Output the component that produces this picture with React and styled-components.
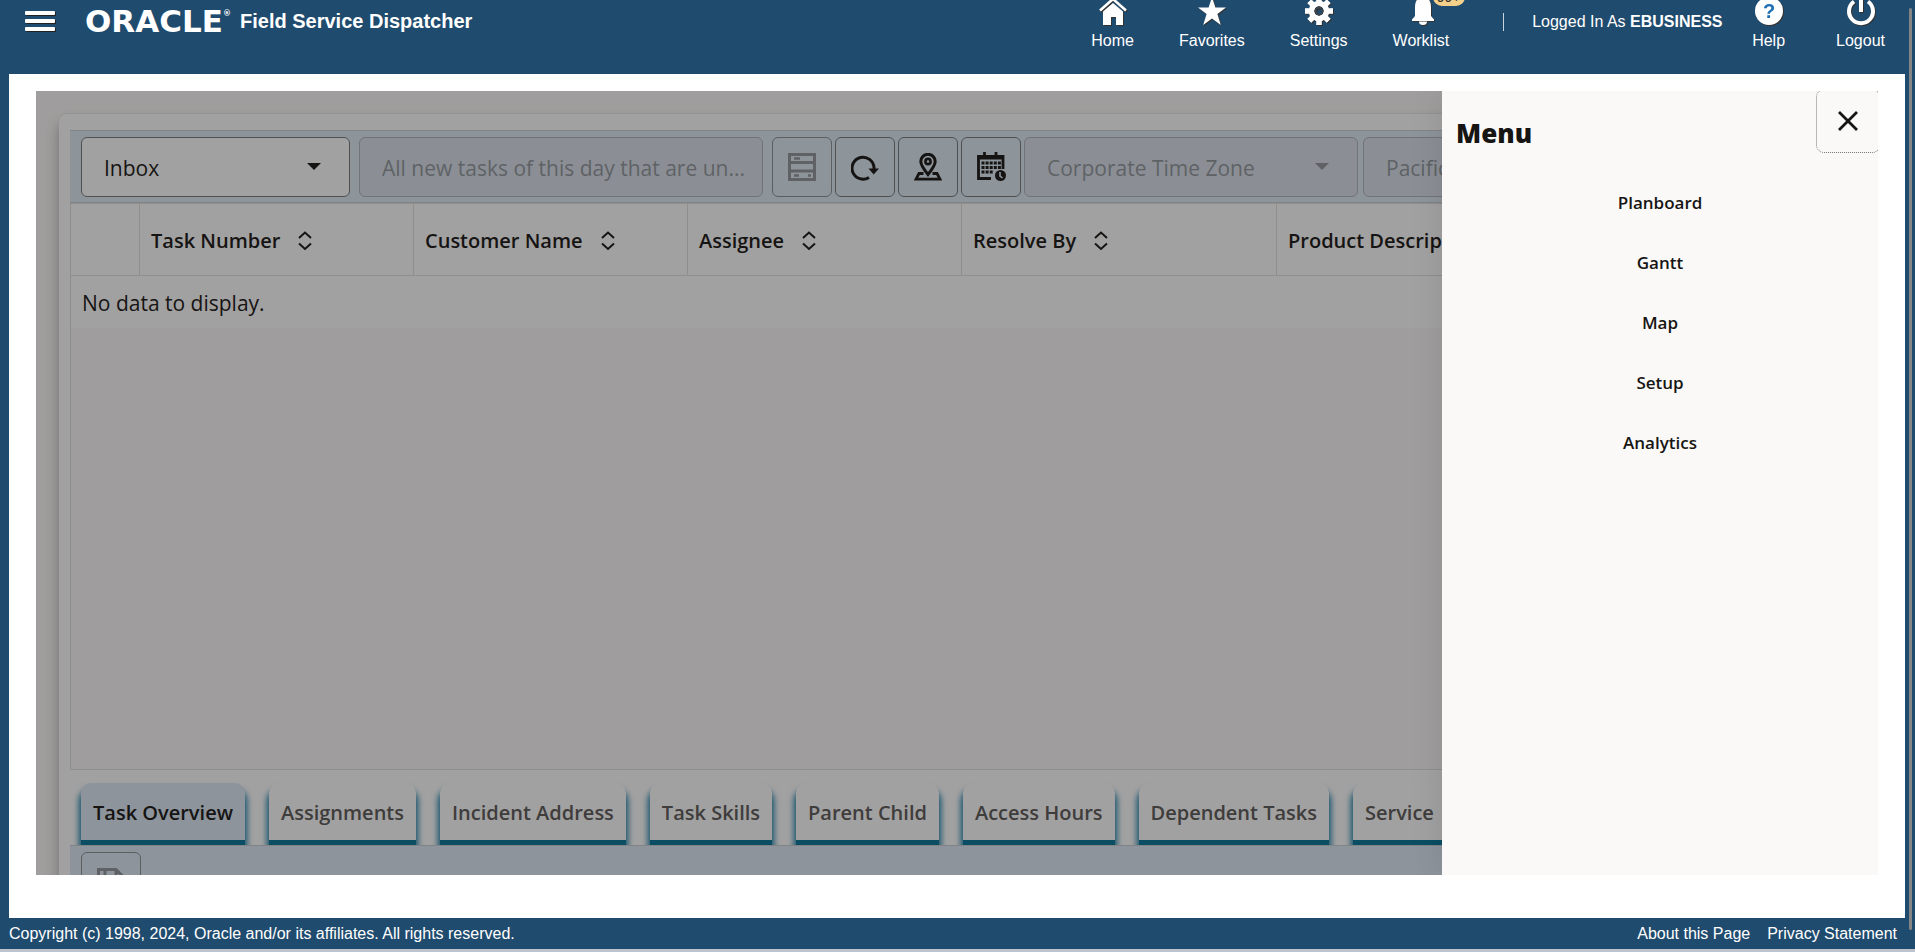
import React from 'react';
import styled, { createGlobalStyle } from 'styled-components';

const columns = [
    { name: '', width: 69 },
    { name: 'Task Number', width: 274 },
    { name: 'Customer Name', width: 274 },
    { name: 'Assignee', width: 274 },
    { name: 'Resolve By', width: 315 },
    { name: 'Product Description' },
];

const tabs = [
    'Task Overview',
    'Assignments',
    'Incident Address',
    'Task Skills',
    'Parent Child',
    'Access Hours',
    'Dependent Tasks',
    'Service',
];

const menuItems = ['Planboard', 'Gantt', 'Map', 'Setup', 'Analytics'];

const App = () => {
    return (
        <Page>
            <GlobalStyle />
            <Header>
                <Brand>
                    <MenuButton aria-label="Navigator">
                        <MenuBar />
                        <MenuBar />
                        <MenuBar />
                    </MenuButton>
                    <Logo>
                        ORACLE<sup>®</sup>
                    </Logo>
                    <AppTitle>Field Service Dispatcher</AppTitle>
                </Brand>
                <Nav>
                    <NavLink href="#home">
                        <HomeIcon />
                        Home
                    </NavLink>
                    <NavLink href="#favorites">
                        <StarIcon />
                        Favorites
                    </NavLink>
                    <NavLink href="#settings">
                        <GearIcon />
                        Settings
                    </NavLink>
                    <NavLink href="#worklist">
                        <BellIcon />
                        Worklist
                        <Badge>99+</Badge>
                    </NavLink>
                </Nav>
                <Session>
                    <Divider />
                    <SessionText>
                        Logged In As <b>EBUSINESS</b>
                    </SessionText>
                </Session>
                <Nav $wide>
                    <NavLink href="#help">
                        <HelpIcon />
                        Help
                    </NavLink>
                    <NavLink href="#logout">
                        <PowerIcon />
                        Logout
                    </NavLink>
                </Nav>
            </Header>

            <Main>
                <Workspace>
                    <Panel>
                        <Toolbar>
                            <Dropdown label="View" value="Inbox" width={269} />
                            <Description
                                aria-label="View description"
                                value="All new tasks of this day that are un..."
                                disabled
                                readOnly
                            />
                            <ButtonGroup>
                                <IconButton aria-label="Task details" disabled>
                                    <ServerIcon />
                                </IconButton>
                                <IconButton aria-label="Refresh">
                                    <RefreshIcon />
                                </IconButton>
                                <IconButton aria-label="Show on map">
                                    <MapPinIcon />
                                </IconButton>
                                <IconButton aria-label="Schedule">
                                    <CalendarIcon />
                                </IconButton>
                                <Dropdown
                                    label="Time zone type"
                                    value="Corporate Time Zone"
                                    width={334}
                                    disabled
                                />
                            </ButtonGroup>
                            <ZoneSlot>
                                <Dropdown
                                    label="Time zone"
                                    value="Pacific Time"
                                    width={334}
                                    disabled
                                />
                            </ZoneSlot>
                        </Toolbar>
                        <Grid>
                            <Table>
                                <colgroup>
                                    {columns.map((c) => (
                                        <col key={c.name} width={c.width} />
                                    ))}
                                </colgroup>
                                <thead>
                                    <tr>
                                        {columns.map((c) => (
                                            <Th key={c.name}>
                                                {c.name && (
                                                    <ThContent>
                                                        {c.name}
                                                        <SortIcon />
                                                    </ThContent>
                                                )}
                                            </Th>
                                        ))}
                                    </tr>
                                </thead>
                                <tbody>
                                    <tr>
                                        <Td colSpan={columns.length}>
                                            No data to display.
                                        </Td>
                                    </tr>
                                </tbody>
                            </Table>
                        </Grid>
                        <TabList role="tablist">
                            {tabs.map((tab, i) => (
                                <Tab
                                    key={tab}
                                    role="tab"
                                    aria-selected={i === 0}
                                    $active={i === 0}
                                >
                                    {tab}
                                </Tab>
                            ))}
                        </TabList>
                        <TabPanel role="tabpanel">
                            <IconButton aria-label="Save" disabled>
                                <SaveIcon />
                            </IconButton>
                        </TabPanel>
                    </Panel>
                    <Scrim />
                    <Drawer>
                        <CloseButton aria-label="Close">
                            <svg width="20" height="20" viewBox="0 0 20 20">
                                <path
                                    d="M1 1L19 19M19 1L1 19"
                                    stroke="#161513"
                                    strokeWidth="2.8"
                                />
                            </svg>
                        </CloseButton>
                        <DrawerTitle>Menu</DrawerTitle>
                        <DrawerNav>
                            {menuItems.map((item) => (
                                <DrawerLink key={item} href={`#${item}`}>
                                    {item}
                                </DrawerLink>
                            ))}
                        </DrawerNav>
                    </Drawer>
                </Workspace>
            </Main>

            <Footer>
                <span>
                    Copyright (c) 1998, 2024, Oracle and/or its affiliates. All
                    rights reserved.
                </span>
                <FooterLinks>
                    <a href="#about">About this Page</a>
                    <a href="#privacy">Privacy Statement</a>
                </FooterLinks>
            </Footer>
            <ScrollThumb />
        </Page>
    );
};

export default App;

const Dropdown = ({ label, value, width, disabled }) => (
    <SelectBox $width={width}>
        <Select aria-label={label} disabled={disabled} defaultValue={value}>
            <option>{value}</option>
        </Select>
        <Caret
            width="14"
            height="8"
            viewBox="0 0 14 8"
            fill={disabled ? '#8f9599' : '#161513'}
        >
            <path d="M0 0h14L7 7z" />
        </Caret>
    </SelectBox>
);

// Header icons
const HomeIcon = () => (
    <HeaderIcon viewBox="0 0 28 28">
        <path
            d="M1 13.5L14 2L27 13.5"
            fill="none"
            stroke="#fff"
            strokeWidth="2.6"
        />
        <path d="M4 14.5L14 6L24 14.5V28H17V20H12V28H4z" />
    </HeaderIcon>
);

const StarIcon = () => (
    <HeaderIcon viewBox="0 0 28 28">
        <path d="M14 0L17.4 10.6H28L19.4 17L22.8 28L14 21.4L5.2 28L8.6 17L0 10.6H10.6z" />
    </HeaderIcon>
);

const GearIcon = () => (
    <HeaderIcon viewBox="0 0 28 28">
        {[0, 45, 90, 135].map((a) => (
            <rect
                key={a}
                x="11.2"
                y="0"
                width="5.6"
                height="28"
                mask="url(#gearHole)"
                transform={`rotate(${a} 14 14)`}
            />
        ))}
        <mask id="gearHole">
            <rect width="28" height="28" fill="#fff" />
            <circle cx="14" cy="14" r="5" fill="#000" />
        </mask>
        <circle
            cx="14"
            cy="14"
            r="7.6"
            fill="none"
            stroke="#fff"
            strokeWidth="5.4"
        />
        <circle
            cx="14"
            cy="14"
            r="3.4"
            fill="none"
            stroke="#3c4650"
            strokeWidth="1.6"
        />
    </HeaderIcon>
);

const BellIcon = () => (
    <HeaderIcon viewBox="0 0 28 28">
        <path d="M16 0C10 0 8 5 8 10V19L5 22.5V24H27V22.5L24 19V10C24 5 22 0 16 0z" />
        <path d="M12 24.5H20C20 27 18.5 28 16 28C13.5 28 12 27 12 24.5z" />
    </HeaderIcon>
);

const HelpIcon = () => (
    <HeaderIcon viewBox="0 0 28 28">
        <circle cx="14" cy="14" r="14" />
        <text
            x="14"
            y="21"
            textAnchor="middle"
            fontFamily="Liberation Sans, sans-serif"
            fontSize="20"
            fontWeight="bold"
            fill="#1f6fb5"
        >
            ?
        </text>
    </HeaderIcon>
);

const PowerIcon = () => (
    <HeaderIcon viewBox="0 0 28 28">
        <path
            d="M7 4.5A12 12 0 1 0 21 4.5M14 1V15"
            fill="none"
            stroke="#fff"
            strokeWidth="4"
        />
    </HeaderIcon>
);

// Toolbar icons
const ServerIcon = () => (
    <svg width="28" height="28" viewBox="0 0 28 28" fill="none">
        <path
            d="M1.5 1.5H26.5V26.5H1.5zM1.5 9.5H26.5M1.5 18H26.5"
            stroke="currentColor"
            strokeWidth="3"
        />
        <path
            d="M6 5.5H12M6 22.5H11M20 22.5H23"
            stroke="currentColor"
            strokeWidth="2.6"
        />
    </svg>
);

const RefreshIcon = () => (
    <svg width="28" height="28" viewBox="0 0 28 28" fill="none">
        <path
            d="M18 24.4A11 11 0 1 1 23 14.5V17"
            stroke="currentColor"
            strokeWidth="3"
        />
        <path d="M17.5 15.5H28L22.7 21.5z" fill="currentColor" />
    </svg>
);

const MapPinIcon = () => (
    <svg width="28" height="28" viewBox="0 0 28 28" fill="none">
        <path
            d="M14 21.5C10 16.5 6.8 12.5 6.8 8.5A7.2 7.2 0 0 1 21.2 8.5C21.2 12.5 18 16.5 14 21.5z"
            stroke="currentColor"
            strokeWidth="3"
        />
        <circle
            cx="14"
            cy="8.5"
            r="2.6"
            stroke="currentColor"
            strokeWidth="2.6"
        />
        <path
            d="M9.5 20.5H5L2 26.2H26L23 20.5H18.5"
            stroke="currentColor"
            strokeWidth="2.8"
        />
    </svg>
);

const CalendarIcon = () => (
    <svg width="30" height="30" viewBox="0 0 30 30" fill="none">
        <path
            d="M15 26.5H2.5V4.5H27V17M8.5 0V7M20 0V7"
            stroke="currentColor"
            strokeWidth="2.8"
        />
        <path d="M1.5 6H28" stroke="currentColor" strokeWidth="3" />
        <path
            d="M5.5 11H25M5.5 15.5H25M5.5 20H17"
            stroke="currentColor"
            strokeWidth="3"
            strokeDasharray="3 1.1"
        />
        <circle cx="24.5" cy="23.5" r="5.5" fill="currentColor" />
        <path d="M24 20V24L26.5 26" stroke="#dceaf7" strokeWidth="1.6" />
    </svg>
);

const SaveIcon = () => (
    <svg width="28" height="28" viewBox="0 0 28 28" fill="none">
        <path
            d="M1.5 1.5H19L26.5 9V26.5H1.5zM8 1.5V10H19V1.5M6 26.5V17H22V26.5"
            stroke="currentColor"
            strokeWidth="3"
        />
    </svg>
);

const SortIcon = () => (
    <svg width="14" height="20" viewBox="0 0 14 20" fill="none">
        <path
            d="M1 7L7 1.5L13 7M1 12.5L7 18L13 12.5"
            stroke="#161513"
            strokeWidth="2"
        />
    </svg>
);

// Styled Components
const GlobalStyle = createGlobalStyle`
    * {
        box-sizing: border-box;
    }

    body {
        margin: 0;
        font-family: 'Liberation Sans', Arial, sans-serif;
        font-size: 16px;
    }

    a {
        color: inherit;
        text-decoration: none;
    }
`;

const Page = styled.div`
    position: relative;
    display: flex;
    flex-direction: column;
    height: 100vh;
    overflow: hidden;
    background: #1f4b6e;
    color: #ffffff;
    border-bottom: 3px solid #bcc5cd;
`;

const Header = styled.header`
    display: flex;
    align-items: flex-end;
    height: 74px;
    flex: none;
    padding: 0 30px 0 25px;
    overflow: hidden;
`;

const Brand = styled.div`
    display: flex;
    align-items: center;
    align-self: flex-start;
    height: 42px;
    margin-right: auto;
`;

const MenuButton = styled.button`
    display: flex;
    flex-direction: column;
    gap: 4px;
    width: 30px;
    margin-right: 30px;
    padding: 0;
    border: 0;
    background: none;
`;

const MenuBar = styled.span`
    height: 4px;
    border-radius: 1px;
    background: #ffffff;
    box-shadow: 1px 1px 0 #222222;
`;

const Logo = styled.span`
    width: 155px;
    font-family: 'DejaVu Sans', sans-serif;
    font-size: 31px;
    font-weight: bold;
    line-height: 40px;
    white-space: nowrap;

    sup {
        font-size: 8px;
        vertical-align: 16px;
        line-height: 8px;
    }
`;

const AppTitle = styled.h1`
    margin: 0;
    font-size: 20px;
    line-height: 24px;
`;

const Nav = styled.nav`
    display: flex;
    gap: ${(p) => (p.$wide ? 51 : 45)}px;
    padding-bottom: 23px;
`;

const NavLink = styled.a`
    position: relative;
    display: flex;
    flex-direction: column;
    align-items: center;
    gap: 6px;
    line-height: 20px;
`;

const HeaderIcon = styled.svg`
    width: 28px;
    height: 28px;
    fill: #ffffff;
    overflow: visible;
    filter: drop-shadow(1px 1px 0 #333333);
`;

const Badge = styled.span`
    position: absolute;
    top: -9px;
    left: 40px;
    width: 32px;
    border-radius: 10px;
    background: #f5d08a;
    color: #333333;
    font-size: 14px;
    line-height: 18px;
    text-align: center;
`;

const Session = styled.div`
    display: flex;
    align-items: center;
    align-self: flex-start;
    height: 44px;
    padding: 0 26px 0 54px;
`;

const SessionText = styled.span`
    width: 194px;
    white-space: nowrap;
`;

const Divider = styled.span`
    width: 1px;
    height: 18px;
    margin-right: 28px;
    background: #c8d3dc;
`;

const Main = styled.main`
    display: flex;
    flex: 1;
    min-height: 0;
    margin: 0 10px 0 9px;
    padding: 17px 27px 43px;
    background: #ffffff;
`;

const Workspace = styled.div`
    position: relative;
    flex: 1;
    min-width: 0;
    padding: 22px 23px 0;
    overflow: hidden;
    background: #fbf9f8;
    color: #161513;
    font-family: 'Open Sans', 'Noto Sans', sans-serif;
`;

const Panel = styled.section`
    padding: 16px 11px;
    border-top: 1px solid #e8e7e5;
    border-radius: 8px;
    background: #ffffff;
    box-shadow: 0 10px 14px rgba(0, 0, 0, 0.3);
`;

const Toolbar = styled.div`
    display: flex;
    gap: 9px;
    padding: 6px 11px 5px;
    overflow: hidden;
    border: solid #c9cfd4;
    border-width: 1px 0;
    background: #dceaf4;
`;

const ButtonGroup = styled.div`
    display: flex;
    gap: 3px;
    flex: none;
`;

const ZoneSlot = styled.div`
    margin-left: -4px;
`;

const SelectBox = styled.div`
    display: grid;
    align-items: center;
    flex: none;
    width: ${(p) => p.$width}px;
`;

const Select = styled.select`
    grid-area: 1 / 1;
    width: 100%;
    height: 60px;
    padding: 2px 22px 0;
    appearance: none;
    border: 1px solid #77797b;
    border-radius: 6px;
    background: #ffffff;
    color: #161513;
    font: 21px 'Open Sans', 'Noto Sans', sans-serif;

    &:disabled {
        border-color: #adb3b8;
        background: #d9e1ec;
        color: #90979c;
        opacity: 1;
    }
`;

const Caret = styled.svg`
    grid-area: 1 / 1;
    justify-self: end;
    margin-right: 29px;
    pointer-events: none;
`;

const Description = styled.input`
    flex: none;
    width: 404px;
    height: 60px;
    padding: 2px 8px 0 22px;
    border: 1px solid #adb3b8;
    border-radius: 6px;
    background: #d9e1ec;
    color: #90979c;
    font: 21px 'Open Sans', 'Noto Sans', sans-serif;
`;

const IconButton = styled.button`
    display: flex;
    align-items: center;
    justify-content: center;
    width: 60px;
    height: 60px;
    padding: 0;
    border: 1px solid #77797b;
    border-radius: 6px;
    background: transparent;
    color: #161513;

    &:disabled {
        border-color: #8b8f92;
        color: #8f959a;
    }
`;

const Grid = styled.div`
    height: 567px;
    border: solid #e0dfdd;
    border-width: 1px 0 1px 1px;
    background: #fbf9f8;
`;

const Table = styled.table`
    width: 100%;
    table-layout: fixed;
    border-spacing: 0;
    font-size: 21px;
    text-align: left;
`;

const Th = styled.th`
    height: 72px;
    padding: 2px 11px 0;
    border: solid #e0dfdd;
    border-width: 0 1px 1px 0;
    background: #ffffff;
    font-size: 20px;
    font-weight: 600;
`;

const ThContent = styled.div`
    display: flex;
    align-items: center;
    gap: 18px;
    white-space: nowrap;
`;

const Td = styled.td`
    height: 52px;
    padding: 2px 11px 0;
    background: #ffffff;
`;

const TabList = styled.div`
    display: flex;
    gap: 24px;
    padding: 13px 11px 0;
    overflow: hidden;
`;

const Tab = styled.button`
    flex: none;
    height: 62px;
    padding: 2px 12px 0;
    border: 0;
    border-bottom: 5px solid #047698;
    border-radius: 10px 10px 0 0;
    background: ${(p) => (p.$active ? '#dceaf7' : '#ffffff')};
    box-shadow: 0 8px 6px 2px #0f7ba8;
    color: ${(p) => (p.$active ? '#161513' : '#5a5958')};
    font: 600 20px 'Open Sans', 'Noto Sans', sans-serif;
    white-space: nowrap;
`;

const TabPanel = styled.div`
    padding: 6px 11px;
    border-top: 1px solid #c9cfd4;
    background: #dceaf7;
`;

const Scrim = styled.div`
    position: absolute;
    inset: 0;
    background: rgba(22, 21, 19, 0.4);
`;

const Drawer = styled.aside`
    position: absolute;
    top: 0;
    right: 0;
    bottom: 0;
    width: 436px;
    padding: 24px 14px;
    overflow: hidden;
    background: #faf9f8;
    box-shadow: 0 0 30px rgba(0, 0, 0, 0.1);
`;

const CloseButton = styled.button`
    position: absolute;
    top: -2px;
    right: -2px;
    display: flex;
    align-items: center;
    justify-content: center;
    width: 64px;
    height: 64px;
    border: 1px dotted #77797b;
    border-radius: 8px;
    background: none;
`;

const DrawerTitle = styled.h2`
    margin: 0;
    font-size: 26px;
    font-weight: 800;
    line-height: 36px;
`;

const DrawerNav = styled.nav`
    display: flex;
    flex-direction: column;
    margin-top: 22px;
`;

const DrawerLink = styled.a`
    font-size: 17px;
    font-weight: 600;
    line-height: 60px;
    text-align: center;
`;

const Footer = styled.footer`
    display: flex;
    justify-content: space-between;
    flex: none;
    padding: 1px 18px 0 9px;
    line-height: 30px;
`;

const FooterLinks = styled.div`
    display: flex;
    gap: 17px;
`;

const ScrollThumb = styled.div`
    position: absolute;
    top: 8px;
    right: 3px;
    bottom: 19px;
    width: 3px;
    border-radius: 2px;
    background: #858585;
`;
